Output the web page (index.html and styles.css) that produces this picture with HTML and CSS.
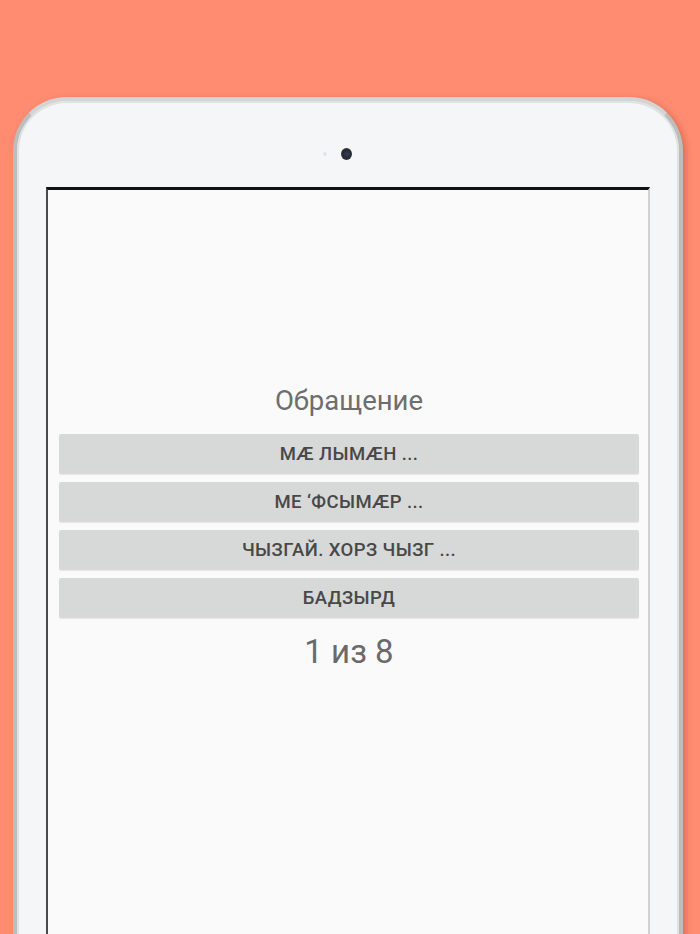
FILE: index.html
```html
<!DOCTYPE html>
<html lang="ru">
<head>
<meta charset="utf-8">
<title>Обращение</title>
<link rel="stylesheet" href="styles.css">
</head>
<body>
<div class="device">
  <div class="bezel-top">
    <span class="sensor"></span>
    <span class="camera"></span>
    <span class="spacer"></span>
  </div>
  <div class="screen">
    <div class="title">Обращение</div>
    <div class="answers">
      <div class="btn">МÆ ЛЫМÆН ...</div>
      <div class="btn">МЕ ‘ФСЫМÆР ...</div>
      <div class="btn">ЧЫЗГАЙ. ХОРЗ ЧЫЗГ ...</div>
      <div class="btn">БАДЗЫРД</div>
    </div>
    <div class="counter">1 из 8</div>
  </div>
</div>
</body>
</html>
```
FILE: styles.css
```css
html, body {
  margin: 0;
  padding: 0;
  height: 934px;
  overflow: hidden;
}
body {
  background: #ff8c70;
  font-family: Roboto, "Noto Sans", "Liberation Sans", sans-serif;
  padding-top: 97px;
  box-sizing: border-box;
}
.device {
  margin-left: 13px;
  width: 670px;
  height: 1000px;
  box-sizing: border-box;
  border: 4px solid #bdbdbd;
  border-top-color: #d4d4d4;
  border-radius: 54px;
  background: #f4f6f8;
  box-shadow: inset 0 0 0 2px #e2e2e2, 3px 2px 6px rgba(120,40,20,0.28);
  padding: 0 29px;
}
.bezel-top {
  height: 86px;
  display: flex;
  justify-content: center;
  align-items: flex-start;
  gap: 14px;
  padding-right: 3px;
  padding-top: 47px;
  box-sizing: border-box;
}
.sensor {
  margin-top: 4px;
  width: 4px;
  height: 4px;
  border-radius: 50%;
  background: #e2e4e8;
}
.camera {
  width: 11px;
  height: 12px;
  border-radius: 50%;
  background: radial-gradient(circle at 55% 50%, #2f3f66 0, #26292f 45%, #3a3d42 100%);
}
.spacer {
  width: 4px;
  height: 4px;
}
.screen {
  background: #fafafa;
  border: 2px solid #4a4a4a;
  border-top: 3px solid #111111;
  border-right: 2px solid #cfd1d3;
  height: 900px;
  padding: 195px 9px 0 11px;
  box-sizing: border-box;
}
.title {
  text-align: center;
  font-size: 27.5px;
  line-height: 32px;
  color: #6e6e6e;
}
.answers {
  margin-top: 17px;
  display: flex;
  flex-direction: column;
  gap: 8px;
}
.btn {
  height: 40px;
  background: #d7d8d8;
  border-radius: 2px;
  box-shadow: 0 1px 1px rgba(0,0,0,0.08);
  display: flex;
  align-items: center;
  justify-content: center;
  font-size: 18.5px;
  font-weight: 500;
  color: #484848;
  letter-spacing: 0.4px;
}
.counter {
  margin-top: 14px;
  text-align: center;
  font-size: 33px;
  line-height: 40px;
  color: #6a6a6a;
}
```
